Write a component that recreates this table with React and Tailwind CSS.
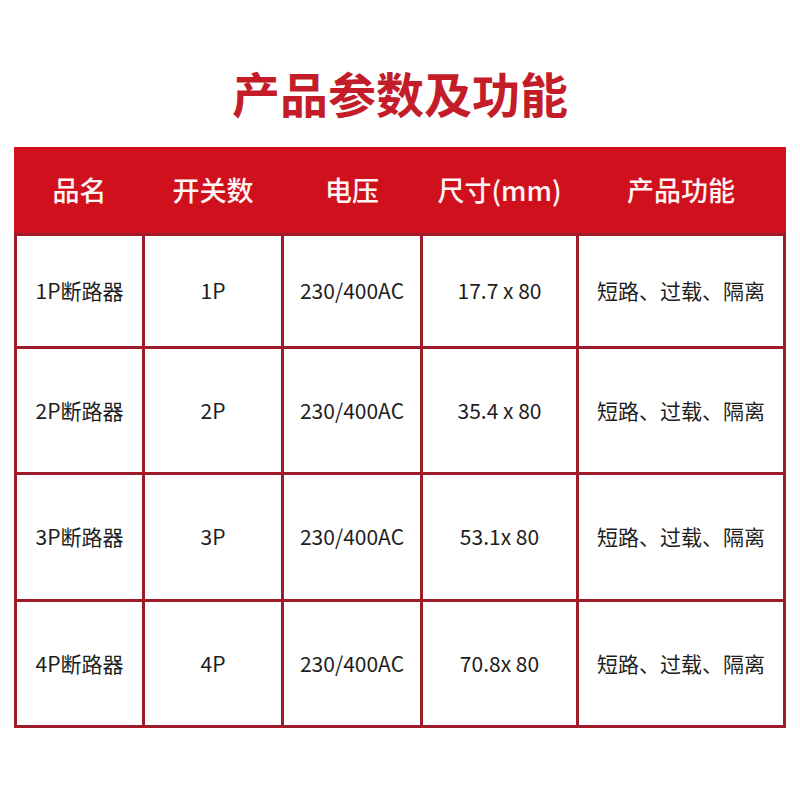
import React from "react";

const rows = [
  { name: "1P断路器", poles: "1P", size: "17.7 x 80", h: "h-[110px]" },
  { name: "2P断路器", poles: "2P", size: "35.4 x 80", h: "h-[123px]" },
  { name: "3P断路器", poles: "3P", size: "53.1x 80", h: "h-[124px]" },
  { name: "4P断路器", poles: "4P", size: "70.8x 80", h: "h-[123px]" },
];

const heads = ["品名", "开关数", "电压", "尺寸(mm)", "产品功能"];

const cols = "grid grid-cols-[125px_136px_136px_153px_204px] gap-x-[3px]";

export default function App() {
  return (
    <div
      className="w-[800px] h-[800px] bg-white overflow-hidden"
      style={{ fontFamily: '"Noto Sans CJK SC", "Noto Sans", sans-serif' }}
    >
      <h1 className="pt-[62px] h-[147px] text-center text-[48px] leading-[60px] font-bold text-[#c41d2a]">
        产品参数及功能
      </h1>
      <div className="mx-[14px] w-[772px]">
        <div className={`${cols} h-[86px] items-center bg-[#d0111d] px-[3px]`}>
          {heads.map((t) => (
            <div key={t} className="text-center text-[27px] font-medium text-[#fff5f5]">
              {t}
            </div>
          ))}
        </div>
        <div className={`${cols} gap-y-[3px] bg-[#9e1b29] p-[3px]`}>
          {rows.map((r) =>
            [r.name, r.poles, "230/400AC", r.size, "短路、过载、隔离"].map((c, i) => (
              <div
                key={r.name + i}
                className={`${r.h} flex items-center justify-center bg-white text-[21px] text-[#1e1e1e]`}
              >
                {c}
              </div>
            ))
          )}
        </div>
      </div>
    </div>
  );
}
